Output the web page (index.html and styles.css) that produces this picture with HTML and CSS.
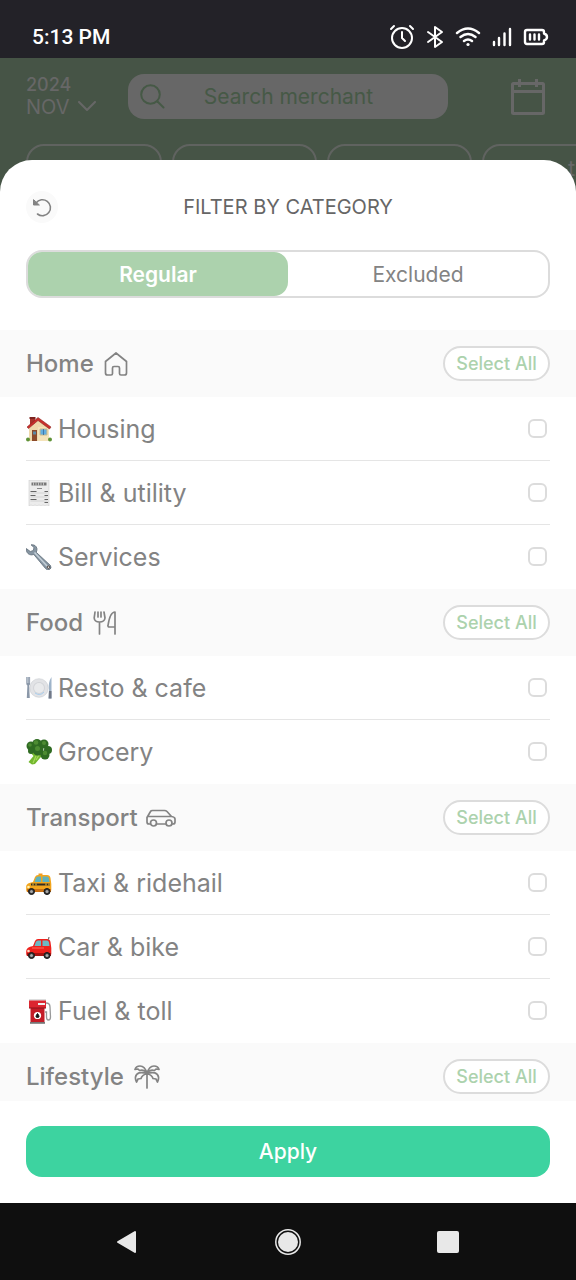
FILE: index.html
```html
<!DOCTYPE html>
<html lang="en">
<head>
<meta charset="utf-8">
<meta name="viewport" content="width=device-width, initial-scale=1">
<title>Filter by category</title>
<link rel="stylesheet" href="styles.css">
</head>
<body>
<div class="screen">
  <div class="status-bar">
    <span class="clock">5:13 PM</span>
    <div class="status-icons">
      <svg width="26" height="26" viewBox="0 0 26 26" fill="none" stroke="currentColor" stroke-width="2" stroke-linecap="round" stroke-linejoin="round"><circle cx="13" cy="14" r="10"/><path d="M13 8v6l3 3M2 5l3-3M24 5l-3-3"/></svg>
      <svg width="18" height="26" viewBox="0 0 18 26" fill="none" stroke="currentColor" stroke-width="2" stroke-linejoin="round" stroke-linecap="round"><path d="M2 8l14 10-7 5V3l7 5L2 18"/></svg>
      <svg width="26" height="26" viewBox="0 0 26 26" fill="none" stroke="currentColor" stroke-width="2.4" stroke-linecap="round"><path d="M2 9q11-9 22 0M5.500 13q7.500-6 15 0M9 17q4-3.200 8 0"/><circle cx="13" cy="20.500" r="1.600" fill="currentColor" stroke="none"/></svg>
      <svg width="20" height="26" viewBox="0 0 20 26" fill="none" stroke="currentColor" stroke-width="2.400" stroke-linecap="round"><path d="M2 18v3M7 14v7M12.500 9.500V21M18 5v16"/></svg>
      <svg width="26" height="26" viewBox="0 0 26 26" fill="none" stroke="currentColor" stroke-width="2.400" stroke-linejoin="round" stroke-linecap="round"><path d="M4 6h15q2 0 2 2v1.500q3 1 3 3.500t-3 3.500V18q0 2-2 2H4q-2 0-2-2V8q0-2 2-2z"/><path d="M7 10.500v5M11.500 10.500v5M16 10.500v5"/></svg>
    </div>
  </div>

  <main class="stage">
    <div class="backdrop">
      <div class="topbar">
        <button class="month" type="button">
          <span class="year">2024</span>
          <span class="month-name">NOV <svg width="18" height="12" viewBox="0 0 18 12" fill="none" stroke="currentColor" stroke-width="2" stroke-linecap="round" stroke-linejoin="round"><path d="M1 1l8 8 8-8"/></svg></span>
        </button>
        <label class="search">
          <svg width="25" height="25" viewBox="0 0 25 25" fill="none" stroke="currentColor" stroke-width="2" stroke-linecap="round"><circle cx="10.500" cy="10.500" r="9.300"/><path d="M17.500 17.500l6 6"/></svg>
          <input type="text" placeholder="Search merchant" aria-label="Search merchant">
        </label>
        <button class="calendar" type="button" aria-label="Calendar">
          <svg width="36" height="38" viewBox="0 0 36 38" fill="none" stroke="currentColor" stroke-width="3" stroke-linejoin="round"><rect x="2.500" y="5.500" width="31" height="30" rx="1"/><path d="M2 13.500h32M9.500 1v8M26.500 1v8"/></svg>
        </button>
      </div>
      <div class="chips">
        <span class="chip"></span>
        <span class="chip"></span>
        <span class="chip"></span>
        <span class="chip chip-last">t</span>
      </div>
    </div>

    <section class="sheet">
      <header class="sheet-head">
        <button class="reset" type="button" aria-label="Reset">
          <svg width="20" height="20" viewBox="0 0 20 20" fill="none" stroke="currentColor" stroke-width="1.600" stroke-linecap="round"><path d="M4 6A8 8 0 1 1 5.500 17"/><path d="M1.500 3v5h5.500z" fill="currentColor" stroke-width="1"/></svg>
        </button>
        <h1 class="title">FILTER BY CATEGORY</h1>
      </header>

      <div class="segmented">
        <button class="segment segment-active" type="button">Regular</button>
        <button class="segment" type="button">Excluded</button>
      </div>

      <div class="list">
        <div class="group">
          <h2 class="group-name">Home
            <svg width="24" height="24" viewBox="0 0 24 24"><path d="M1.500 9.500L12 1l10.500 8.500V21q0 2-2 2H17q-1.500 0-1.500-1.500V16q0-1.500-1.500-1.500h-4Q8.500 14.500 8.500 16v5.500Q8.500 23 7 23H3.500q-2 0-2-2z"/></svg>
          </h2>
          <button class="select-all" type="button">Select All</button>
        </div>
        <div class="rows">
          <label class="row">
            <svg class="emoji" viewBox="0 0 26 26"><path d="M4 1h5v8H4z" fill="#a8332b"/><path d="M3.500 1h6v2h-6z" fill="#7d231f"/><path d="M3 12L12 4l11 8v13H3z" fill="#efd9ac"/><path d="M12 11h11v14H12z" fill="#f5e3ba"/><path d="M1 11L12 1.500 25 11l-1.500 2L12 4.500 2.500 12.500z" fill="#c92f2c" stroke="#8e2622" stroke-width=".6"/><path d="M6 14h5v11H6z" fill="#8c4a2a"/><path d="M7 15.500h3v3H7z" fill="#5b88a5"/><path d="M14 13h7v6h-7z" fill="#64aee0" stroke="#c9ba8e"/><path d="M17.500 13v6" stroke="#4179aa"/><circle cx="2" cy="23.500" r="2" fill="#5f9237"/><circle cx="24" cy="23.500" r="2" fill="#5f9237"/></svg>
            <span class="row-name">Housing</span><input class="tick" type="checkbox">
          </label>
          <label class="row">
            <svg class="emoji" viewBox="0 0 26 26"><path d="M3 0h20v26l-2-1-2 1-2-1-2 1-2-1-2 1-2-1-2 1-2-1-2 1z" fill="#ececec" stroke="#cfcfcf" stroke-width=".6"/><path d="M5.500 2.500h15v3h-15z" fill="#777"/><path d="M7.500 2.500v3M10 2.500v3M12.500 2.500v3M15 2.500v3M17.500 2.500v3" stroke="#e2e2e2" stroke-width=".7"/><path d="M11 8.500h5" stroke="#888"/><path d="M4.500 11.500h6M4.500 15.500h5M4.500 19.500h6M18.500 11.500h3.500M18.500 15.500h3.500M18.500 19.500h3.500M18.500 22.500h3.500" stroke="#666" stroke-width="1.100"/><path d="M4.500 13h17M4.500 17h17M4.500 21h17" stroke="#bbb" stroke-width=".5"/></svg>
            <span class="row-name">Bill &amp; utility</span><input class="tick" type="checkbox">
          </label>
          <label class="row">
            <svg class="emoji" viewBox="0 0 26 26"><path d="M5 .8q5-.5 6 4 0 2-.8 3.500L24.500 21.500q1.500 3-1 4t-4-1L7.800 10.500Q3 12 .8 8L.3 4.500l4 3 3-1 .7-3z" fill="#8796a3" stroke="#5f6d79" stroke-width=".8"/><path d="M8.500 8.500L21 22" stroke="#c5d0d8" stroke-width="1.500"/><circle cx="22.500" cy="23.200" r="1.200" fill="#eee" stroke="#53463f"/></svg>
            <span class="row-name">Services</span><input class="tick" type="checkbox">
          </label>
        </div>

        <div class="group">
          <h2 class="group-name">Food
            <svg width="24" height="24" viewBox="0 0 24 24"><path d="M2 1l-.8 6Q1.500 11 6.500 11T12 7l-1-6M6.500 11v12M5 1v5M8 1v5M22 23V1Q17 1 15 14.500q-.3 1.500 1.500 1.500H22"/></svg>
          </h2>
          <button class="select-all" type="button">Select All</button>
        </div>
        <div class="rows">
          <label class="row">
            <svg class="emoji" viewBox="0 0 26 26"><circle cx="13" cy="13" r="9.300" fill="#e2e3e6" stroke="#c8cbd0" stroke-width=".6"/><circle cx="13" cy="13" r="6" fill="#d3d5d9"/><circle cx="13" cy="13" r="5" fill="#e9eaec"/><path d="M9 18q5 3.500 9-1" fill="none" stroke="#a9ceee"/><path d="M.3 2h3.800v6.500q0 1.500-1 2L3.800 23H.8l.6-12.500q-1.100-.5-1.100-2z" fill="#8a97a8"/><path d="M1.500 2v6M2.900 2v6" stroke="#dce4ec" stroke-width=".5"/><path d="M25.500 2v21.500h-3L23 15q-1-8 2.500-13z" fill="#9fb4ca"/><path d="M23 16h2.500v7.500H22.600z" fill="#727987"/></svg>
            <span class="row-name">Resto &amp; cafe</span><input class="tick" type="checkbox">
          </label>
          <label class="row">
            <svg class="emoji" viewBox="0 0 26 26"><path d="M4 13l15 1-5 5-5 6-3 .5L2.500 23l5-6z" fill="#73b82e"/><path d="M10 17l-3 7M13 16l-3 5" stroke="#a5d95b" stroke-width="1.200"/><g fill="#2f6b22"><circle cx="5" cy="7" r="4.500"/><circle cx="11" cy="4.500" r="4.500"/><circle cx="18" cy="5" r="4.500"/><circle cx="22" cy="11" r="4"/><circle cx="19" cy="16" r="4.500"/><circle cx="12" cy="11" r="5.500"/><circle cx="5" cy="12" r="3"/></g><g fill="#4d8c32"><circle cx="10" cy="3.500" r="2.300"/><circle cx="18" cy="4" r="2"/><circle cx="11.500" cy="9.500" r="2.500"/><circle cx="19" cy="14" r="2.200"/><circle cx="4" cy="6" r="1.800"/></g></svg>
            <span class="row-name">Grocery</span><input class="tick" type="checkbox">
          </label>
        </div>

        <div class="group">
          <h2 class="group-name group-name-tight">Transport
            <svg width="30" height="24" viewBox="0 0 30 24"><path d="M4.500 18H3q-2 0-2-2v-4.500L4.500 5.500Q5 4.500 6.500 4.500h12q1.500 0 2.500 1l4.500 5q3.500.5 3.500 2.500V16q0 2-2 2h-.5M10.500 18h9M1.500 10.500h24"/><circle cx="7.500" cy="17" r="3"/><circle cx="23" cy="17" r="3"/></svg>
          </h2>
          <button class="select-all" type="button">Select All</button>
        </div>
        <div class="rows">
          <label class="row">
            <svg class="emoji" viewBox="0 0 26 26"><path d="M12.500 3.500h4V6h-4z" fill="#f49a20"/><path d="M7 12l2-5q1-2 3-2h9q3 0 3.500 3l.8 6v6q0 2-2 2H2q-2 0-1.800-2v-4Q.5 13 7 12z" fill="#f2a51c"/><path d="M8.500 12l1.300-4Q10.500 6.500 12 6.500h3V12zM16.500 6.500H21q1.500 0 2 2l.5 3.500h-7z" fill="#5fb2bd"/><path d="M5 14.500h19" stroke="#302a22" stroke-width="2"/><path d="M7 13.500v2M10 13.500v2M20 13.500v2M23 13.500v2" stroke="#f7c73b"/><path d="M1 19h24v3H1z" fill="#cc7214"/><circle cx="2.500" cy="17" r="1.300" fill="#fff0b0"/><g fill="#343434" stroke="#171717"><circle cx="5.500" cy="21.500" r="3"/><circle cx="21" cy="21.500" r="3"/></g><g fill="#aaa"><circle cx="5.500" cy="21.500" r="1.500"/><circle cx="21" cy="21.500" r="1.500"/></g></svg>
            <span class="row-name">Taxi &amp; ridehail</span><input class="tick" type="checkbox">
          </label>
          <label class="row">
            <svg class="emoji" viewBox="0 0 26 26"><path d="M7 12l2-5q1-2 3-2h9q3 0 3.500 3l.8 6v6q0 2-2 2H2q-2 0-1.800-2v-3Q.5 13 7 12z" fill="#ee211c"/><path d="M8.500 12l1.300-4Q10.500 6.500 12 6.500h3V12zM16.500 6.500H21q1.500 0 2 2l.5 3.500h-7z" fill="#6db8c3"/><path d="M22.500 5.500L23 3" stroke="#555"/><path d="M1 19h24v3H1z" fill="#a91210"/><path d="M6 14h12" stroke="#ff6a5f"/><circle cx="2.500" cy="17" r="1.300" fill="#ffd9c0"/><g fill="#343434" stroke="#171717"><circle cx="5.500" cy="21.500" r="3"/><circle cx="21" cy="21.500" r="3"/></g><g fill="#aaa"><circle cx="5.500" cy="21.500" r="1.500"/><circle cx="21" cy="21.500" r="1.500"/></g></svg>
            <span class="row-name">Car &amp; bike</span><input class="tick" type="checkbox">
          </label>
          <label class="row">
            <svg class="emoji" viewBox="0 0 26 26"><path d="M20 5q4 0 4 4l.5 10q0 3-2 3t-2-3V14H19" fill="none" stroke="#999" stroke-width="1.300"/><path d="M3 1h17v9H3z" fill="#dc2630"/><path d="M4.500 10h14v15h-14z" fill="#c41c27"/><path d="M3 1h17v1.500H3z" fill="#ddd"/><path d="M12 5h7v2h-7z" fill="#eee"/><path d="M3 10h17" stroke="#8e131b"/><path d="M4 24h15v1.800H4z" fill="#777"/><circle cx="11.500" cy="17.500" r="3.600" fill="#fff"/><path d="M11.500 15.500q3 4 0 4t0-4z" fill="#111" stroke="#111"/></svg>
            <span class="row-name">Fuel &amp; toll</span><input class="tick" type="checkbox">
          </label>
        </div>

        <div class="group">
          <h2 class="group-name">Lifestyle
            <svg width="26" height="24" viewBox="0 0 26 24"><path d="M13 23V8.500M13 8.500Q11 1 6 1 2 1 1 4.500l3-.5 1.500 1.500Q10 4 13 8.500zM13 8.500Q15 1 20 1q4 0 5 3.500L22 4l-1.500 1.500Q16 4 13 8.500zM13 8.500Q3 5.500 1.500 12q-.3 3 1 5L4 14l3-.5Q8 10 13 8.500zM13 8.500q10-3 11.500 3.500.3 3-1 5L22 14l-3-.5Q18 10 13 8.500z"/></svg>
          </h2>
          <button class="select-all" type="button">Select All</button>
        </div>
      </div>

      <footer class="sheet-foot"><button class="apply" type="button">Apply</button></footer>
    </section>
  </main>

  <nav class="nav-bar">
    <button class="nav-key" type="button" aria-label="Back"><svg width="26" height="26" viewBox="0 0 26 26"><path d="M20 3v20L3 13z" fill="currentColor" stroke="currentColor" stroke-width="2" stroke-linejoin="round"/></svg></button>
    <button class="nav-key" type="button" aria-label="Home"><svg width="26" height="26" viewBox="0 0 26 26"><circle cx="13" cy="13" r="12.200" fill="none" stroke="currentColor" stroke-width="1.500"/><circle cx="13" cy="13" r="10" fill="currentColor"/></svg></button>
    <button class="nav-key" type="button" aria-label="Recent apps"><svg width="26" height="26" viewBox="0 0 26 26"><rect x="2" y="2" width="22" height="22" rx="2" fill="currentColor"/></svg></button>
  </nav>
</div>
</body>
</html>
```
FILE: styles.css
```css
* { box-sizing: border-box; }

body {
  margin: 0;
  font-family: Inter, "Liberation Sans", sans-serif;
  color: #838383;
}

button, input { font: inherit; color: inherit; margin: 0; padding: 0; border: 0; background: none; }
svg { display: block; flex: none; }

.screen { display: flex; flex-direction: column; height: 100vh; background: #465446; }

.status-bar {
  display: flex;
  align-items: center;
  justify-content: space-between;
  padding: 16px 27px 0 32px;
  height: 58px;
  background: #232228;
  color: #fff;
}
.clock { font-family: Roboto, sans-serif; font-size: 21px; font-weight: 500; }
.status-icons { display: flex; align-items: center; gap: 11px; }

.stage { display: grid; flex: 1; min-height: 0; grid-template: minmax(0, 1fr) / minmax(0, 1fr); }
.backdrop, .sheet { grid-area: 1 / 1; }

.backdrop { color: #676767; overflow: hidden; }
.topbar { display: flex; align-items: center; padding: 16px 28px 0 26px; }
.month { display: flex; flex: none; flex-direction: column; width: 102px; text-align: left; }
.year { font-size: 18px; line-height: 20px; font-weight: 500; }
.month-name { display: flex; align-items: center; gap: 8px; font-size: 20px; line-height: 24px; }
.search {
  display: flex;
  align-items: center;
  flex: 1;
  min-width: 0;
  height: 45px;
  padding: 0 12px;
  border-radius: 16px;
  background: #676767;
  color: #465946;
}
.search input { flex: 1; width: 0; min-width: 0; margin-right: 24px; text-align: center; font-size: 21px; }
.search input::placeholder { color: inherit; opacity: 1; }
.calendar { flex: none; margin: 0 2px 0 62px; }

.chips { display: flex; gap: 10px; padding: 25px 0 0 26px; }
.chip { flex: none; width: 145px; height: 48px; border: 2px solid #606360; border-radius: 18px; font-size: 22px; line-height: 44px; }
.chip:first-child { width: 136px; }
.chip-last { padding-left: 84px; }

.sheet {
  display: flex;
  flex-direction: column;
  margin-top: 102px;
  border-radius: 32px 32px 0 0;
  background: #fff;
}
.sheet-head { display: grid; grid-template-columns: 32px 1fr 32px; align-items: center; padding: 30px 26px 26px; }
.reset { display: grid; place-items: center; width: 32px; height: 32px; border-radius: 50%; background: #fafafa; }
.title { margin: 0; text-align: center; font-size: 20px; line-height: 34px; font-weight: 400; color: #666; }

.segmented { display: flex; margin: 0 26px 32px; border: 2px solid #dcdcdc; border-radius: 16px; }
.segment { flex: 1; height: 44px; border-radius: 14px; font-size: 21px; }
.segment-active { background: #acd2ad; color: #fff; font-weight: 600; }

.list { flex: 1; min-height: 0; overflow: hidden; }
.group { display: flex; align-items: center; justify-content: space-between; height: 67px; padding: 0 26px; background: #fafafa; }
.group-name { display: flex; align-items: center; gap: 10px; margin: 0; font-size: 24px; line-height: 32px; font-weight: 500; }
.group-name-tight { gap: 8px; }
.group-name svg { fill: none; stroke: currentColor; stroke-width: 1.7; stroke-linecap: round; stroke-linejoin: round; }
.select-all { width: 107px; height: 35px; border: 2px solid #dcdcdc; border-radius: 18px; background: #fff; color: #acd2ad; font-size: 18px; font-weight: 500; }

.rows { padding: 0 26px; }
.row { display: flex; align-items: center; height: 64px; padding-right: 3px; border-bottom: 1px solid #e5e5e5; }
.row:last-child { border-bottom-color: transparent; }
.emoji { width: 26px; height: 26px; }
.row-name { flex: 1; margin-left: 6px; font-size: 25px; line-height: 32px; }
.tick { appearance: none; width: 19px; height: 19px; border: 2px solid #dcdcdc; border-radius: 6px; background: #fff; }
.tick:checked { background: #acd2ad; }

.sheet-foot { padding: 25px 26px 26px; }
.apply { display: block; width: 100%; height: 51px; border-radius: 16px; background: #3dd3a0; color: #fff; font-size: 21px; font-weight: 500; }

.nav-bar { display: flex; justify-content: center; align-items: center; gap: 134px; height: 77px; background: #0f0f0f; color: #e8e8e8; }
```
